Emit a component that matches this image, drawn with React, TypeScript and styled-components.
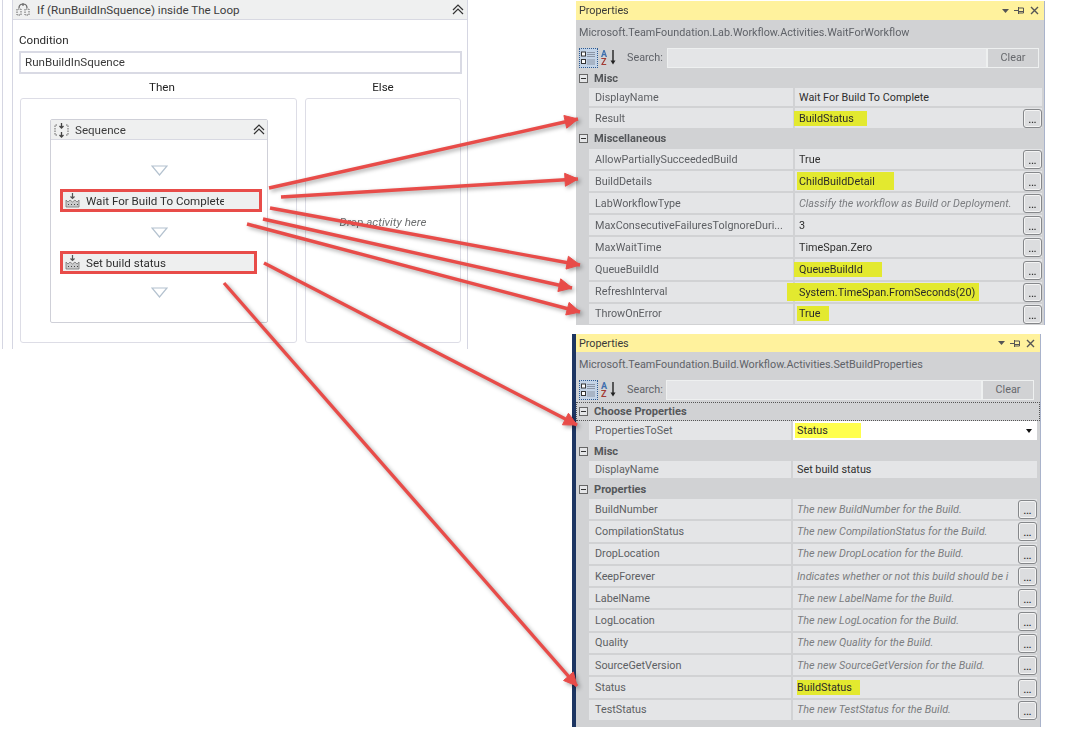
import { createGlobalStyle, styled } from 'styled-components';

const GlobalStyle = createGlobalStyle`
  html, body {
    margin: 0;
    padding: 0;
    background: #ffffff;
  }
  body {
    font-family: Roboto, 'Liberation Sans', sans-serif;
    font-size: 11.6px;
    color: #333;
  }
  * {
    box-sizing: border-box;
  }
`;

const Page = styled.div`
  position: relative;
  width: 1067px;
  height: 733px;
  display: flex;
  align-items: flex-start;
  overflow: hidden;
  filter: blur(0.3px);
`;

/* ---------- workflow designer ---------- */

const Designer = styled.div`
  width: 466px;
  height: 349px;
  margin-left: 2px;
  padding-left: 9px;
  border-left: 1px solid #d5d6e2;
  flex-shrink: 0;
`;
const DesignerFrame = styled.div`
  height: 100%;
  border-left: 1px solid #d5d6e2;
  border-right: 1px solid #d5d6e2;
`;
const ActivityHeader = styled.div`
  height: 20px;
  display: flex;
  align-items: center;
  background: #eff0f0;
  border-bottom: 1px solid #d8d9e2;
  color: #3c3c3c;
`;
const HeaderTitle = styled.span`
  flex: 1;
  margin-left: 6px;
`;
const HeaderCollapse = styled.span`
  display: flex;
  margin-right: 3px;
`;
const DesignerBody = styled.div`
  padding: 12px 5px 0 6px;
`;
const ConditionLabel = styled.div`
  height: 19px;
  line-height: 16px;
  color: #2a2a2a;
`;
const ConditionInput = styled.div`
  width: 443px;
  height: 23px;
  padding-left: 4px;
  line-height: 18px;
  border: 2px solid #d9dae4;
  color: #3a3a3a;
`;
const Branches = styled.div`
  display: grid;
  grid-template-columns: 277px 156px;
  column-gap: 8px;
  margin-left: 1px;
`;
const BranchLabel = styled.div<{ $shift?: number }>`
  height: 24px;
  padding: 5px 0 0 ${(p) => p.$shift ?? 0}px;
  line-height: 17px;
  text-align: center;
  color: #222;
`;
const BranchBox = styled.div`
  height: 245px;
  border: 1px solid #dddde6;
  border-radius: 3px;
`;
const ThenBox = styled(BranchBox)`
  padding: 20px 0 0 29px;
`;
const ElseBox = styled(BranchBox)`
  display: flex;
  align-items: center;
  justify-content: center;
  padding-top: 2px;
  font-style: italic;
  color: #6d6f70;
`;
const SequenceBox = styled.div`
  width: 218px;
  height: 204px;
  border: 1px solid #cfd0d8;
  border-radius: 2px;
`;
const SequenceHeader = styled(ActivityHeader)`
  padding: 0 2px 0 3px;
`;
const SequenceBody = styled.div`
  display: flex;
  flex-direction: column;
  align-items: center;
  padding-top: 25px;
`;
const DropMark = styled.svg`
  width: 17px;
  height: 11px;
  display: block;
`;
const Activity = styled.div<{ $width: number; $after: number }>`
  align-self: flex-start;
  width: ${(p) => p.$width}px;
  height: 23px;
  margin: 13px 0 ${(p) => p.$after}px 9px;
  padding-left: 2px;
  display: flex;
  align-items: center;
  border: 3px solid #e84c49;
  background: #eeefef;
  color: #2f2f2f;
`;
const ActivityName = styled.span`
  width: 138px;
  margin-left: 6px;
  white-space: nowrap;
  overflow: hidden;
`;

const IfIcon = () => (
  <svg width="16" height="16" viewBox="0 0 16 16" fill="none" stroke="#666" style={{ marginLeft: 2 }}>
    <path d="M2 7v6h4V7zM10 7v6h4V7z" strokeDasharray="1.5 1" />
    <path d="M4 6c0-3 2-4 4-4s4 1 4 4M8 1v3" strokeWidth="1.2" />
  </svg>
);
const SequenceIcon = () => (
  <svg width="15" height="16" viewBox="0 0 15 16" fill="none" stroke="#666">
    <path d="M3 3H1v10h2M12 3h2v10h-2" strokeDasharray="1.5 1" />
    <path d="M7.5 1v5M5.5 4l2 2 2-2M7.5 10v5M5.5 13l2 2 2-2" strokeWidth="1.3" stroke="#444" />
  </svg>
);
const ActivityIcon = () => (
  <svg width="15" height="15" viewBox="0 0 15 15" fill="none">
    <path d="M7.5 0v5M5.5 3.5l2 2 2-2" stroke="#555" strokeWidth="1.2" />
    <path d="M1 7l2 2 2-2 2.5 2L10 7l2 2 2-2v7H1z" fill="#c9cacb" stroke="#777" strokeWidth="0.8" />
    <path d="M3 11.5h1M6 11.5h1M9 11.5h1M12 11.5h1" stroke="#444" />
  </svg>
);
const CollapseIcon = () => (
  <svg width="12" height="11" viewBox="0 0 12 11" fill="none" stroke="#333" strokeWidth="1.2">
    <path d="M1 6l5-5 5 5M1 10l5-5 5 5" />
  </svg>
);
const DropTriangle = () => (
  <DropMark viewBox="0 0 17 11" fill="none" stroke="#b4c2cf" strokeWidth="1.2">
    <path d="M1 1h15l-7.5 9z" />
  </DropMark>
);

/* ---------- properties panels ---------- */

const RightColumn = styled.div`
  margin-left: 104px;
  padding-top: 1px;
  display: flex;
  flex-direction: column;
  gap: 9px;
  font-size: 10.8px;
`;
const Panel = styled.div<{ $height: number; $docked?: boolean }>`
  width: 469px;
  height: ${(p) => p.$height}px;
  margin-left: ${(p) => (p.$docked ? 0 : 4)}px;
  background: #d1d2d4;
  border-right: 1px solid #a9b3cb;
  border-left: ${(p) => (p.$docked ? '4px solid #1d3562' : 'none')};
  color: #555;
`;
const TitleBar = styled.div<{ $height: number }>`
  height: ${(p) => p.$height}px;
  display: flex;
  align-items: center;
  justify-content: space-between;
  padding: 0 5px 0 3px;
  background: #fff29d;
  color: #3a3a3a;
`;
const TitleButtons = styled.div`
  display: flex;
  align-items: center;
  gap: 5px;
`;
const TypeName = styled.div`
  height: 24px;
  padding-left: 3px;
  line-height: 25px;
  color: #5f6268;
`;
const Toolbar = styled.div<{ $inputWidth: number; $gap: number }>`
  height: 21px;
  margin-top: 3px;
  padding-left: 3px;
  display: grid;
  grid-template-columns: 19px 19px ${(p) => p.$gap}px ${(p) => p.$inputWidth}px 52px;
  align-items: center;
`;
const CategoryButton = styled.div`
  width: 19px;
  height: 20px;
  display: flex;
  align-items: center;
  justify-content: center;
  background: #c3d3e6;
  border: 1px dotted #2f5a8f;
`;
const SearchLabel = styled.span`
  padding-left: 10px;
  color: #5f6268;
`;
const SearchInput = styled.div`
  height: 20px;
  background: #e4e5e7;
  border: 1px solid #eef0f0;
`;
const ClearButton = styled.div`
  height: 20px;
  line-height: 17px;
  text-align: center;
  border: 1px solid #eef0f0;
  color: #66686c;
`;
const Group = styled.div<{ $top?: number; $height: number; $focused?: boolean }>`
  height: ${(p) => p.$height}px;
  margin-top: ${(p) => p.$top ?? 0}px;
  padding: 0 0 ${(p) => p.$height - 19}px 3px;
  display: flex;
  align-items: center;
  gap: 6px;
  font-size: 11.1px;
  font-weight: 700;
  color: #55575a;
  outline: ${(p) => (p.$focused ? '1px dotted #555' : 'none')};
  outline-offset: -1px;
`;
const MinusBox = styled.span`
  width: 9px;
  height: 9px;
  display: flex;
  align-items: center;
  justify-content: center;
  border: 1px solid #666;
  background: #e4e5e7;
  &::before {
    content: '';
    width: 5px;
    height: 1px;
    background: #333;
  }
`;
const Row = styled.div<{ $height: number; $width: number; $label: number }>`
  width: ${(p) => p.$width}px;
  height: ${(p) => p.$height}px;
  margin-left: 13px;
  padding-bottom: 2px;
  display: grid;
  grid-template-columns: ${(p) => p.$label}px minmax(0, 1fr);
  column-gap: 2px;
`;
const RowLabel = styled.div`
  padding-left: 6px;
  display: flex;
  align-items: center;
  background: #e4e5e7;
  color: #5d5f63;
  white-space: nowrap;
  overflow: hidden;
`;
const RowValue = styled.div<{ $white?: boolean }>`
  position: relative;
  display: flex;
  align-items: center;
  padding-left: 4px;
  background: ${(p) => (p.$white ? '#ffffff' : '#e4e5e7')};
  color: #2e2e2e;
  white-space: nowrap;
`;
const ValueText = styled.span<{ $hint?: boolean }>`
  flex: 1;
  min-width: 0;
  font-style: ${(p) => (p.$hint ? 'italic' : 'normal')};
  color: ${(p) => (p.$hint ? '#7b7d80' : '#2e2e2e')};
`;
const Highlight = styled.span<{ $left: number; $right: number; $tall?: boolean; $bright?: boolean }>`
  display: inline-block;
  margin-left: -${(p) => p.$left}px;
  padding: ${(p) => (p.$tall ? 3 : 1)}px ${(p) => p.$right}px ${(p) => (p.$tall ? 2 : 1)}px ${(p) => p.$left}px;
  background: ${(p) => (p.$bright ? '#ffff4c' : '#e3e92f')};
  color: #2a2a2a;
`;
const EllipsisButton = styled.div`
  width: 19px;
  height: 19px;
  flex-shrink: 0;
  margin-top: 1px;
  display: flex;
  align-items: flex-end;
  justify-content: center;
  padding-bottom: 3px;
  font-size: 9px;
  font-weight: 700;
  line-height: 8px;
  background: #dcdddf;
  border: 1px solid #85878a;
  border-radius: 3px;
  box-shadow: inset 0 0 0 1px #f4f4f4;
`;
const DropCaret = styled.span`
  position: absolute;
  right: 5px;
  top: 8px;
  border-left: 3px solid transparent;
  border-right: 3px solid transparent;
  border-top: 4px solid #111;
`;

const TitleIcons = () => (
  <TitleButtons>
    <svg width="7" height="4" viewBox="0 0 7 4"><path d="M0 0h7L3.5 4z" fill="#555" /></svg>
    <svg width="11" height="9" viewBox="0 0 11 9" fill="none" stroke="#555"><path d="M0 4.5h4M4.5 1v7M4.5 2h5v5h-5M4.5 5.5h5" /></svg>
    <svg width="9" height="9" viewBox="0 0 9 9" fill="none" stroke="#555" strokeWidth="1.4"><path d="M1 1l7 7M8 1L1 8" /></svg>
  </TitleButtons>
);
const CategoryIcon = () => (
  <svg width="15" height="14" viewBox="0 0 15 14" fill="none">
    <rect x="0.5" y="1" width="4" height="4" fill="#fff" stroke="#333" />
    <rect x="0.5" y="8.5" width="4" height="4" fill="#fff" stroke="#333" />
    <path d="M6 1.5h8M6 3.5h8M6 5.5h8M6 9h8M6 11h8M6 13h8" stroke="#8b95a5" />
  </svg>
);
const SortIcon = () => (
  <svg width="17" height="17" viewBox="0 0 17 17" style={{ marginLeft: 3 }}>
    <text x="0" y="8" fontSize="9" fontWeight="700" fill="#3f6fae" fontFamily="Roboto, sans-serif">A</text>
    <text x="0" y="16" fontSize="9" fontWeight="700" fill="#a33b34" fontFamily="Roboto, sans-serif">Z</text>
    <path d="M12 1v12" stroke="#222" strokeWidth="1.4" />
    <path d="M9.5 11.5h5L12 15.5z" fill="#222" />
  </svg>
);

type Mark = { left: number; right: number; tall?: boolean; bright?: boolean };
type PropRow = { name: string; value: string; hint?: boolean; mark?: Mark; button?: boolean; select?: boolean };
type Section = { title: string; rowHeights: number[]; headerHeight?: number; focused?: boolean; top?: number; rows: PropRow[] };

const waitSections: Section[] = [
  {
    title: 'Misc',
    rowHeights: [20, 21],
    top: 1,
    rows: [
      { name: 'DisplayName', value: 'Wait For Build To Complete' },
      { name: 'Result', value: 'BuildStatus', button: true, mark: { left: 5, right: 13 } },
    ],
  },
  {
    title: 'Miscellaneous',
    rowHeights: [22.1],
    headerHeight: 20,
    rows: [
      { name: 'AllowPartiallySucceededBuild', value: 'True', button: true },
      { name: 'BuildDetails', value: 'ChildBuildDetail', button: true, mark: { left: 2, right: 19, tall: true } },
      { name: 'LabWorkflowType', value: 'Classify the workflow as Build or Deployment.', hint: true, button: true },
      { name: 'MaxConsecutiveFailuresToIgnoreDuri...', value: '3', button: true },
      { name: 'MaxWaitTime', value: 'TimeSpan.Zero', button: true },
      { name: 'QueueBuildId', value: 'QueueBuildId', button: true, mark: { left: 5, right: 19 } },
      { name: 'RefreshInterval', value: 'System.TimeSpan.FromSeconds(20)', button: true, mark: { left: 12, right: 4, tall: true } },
      { name: 'ThrowOnError', value: 'True', button: true, mark: { left: 2, right: 9 } },
    ],
  },
];

const buildSections: Section[] = [
  {
    title: 'Choose Properties',
    rowHeights: [21],
    focused: true,
    top: 2,
    rows: [
      { name: 'PropertiesToSet', value: 'Status', select: true, mark: { left: 2, right: 33, bright: true } },
    ],
  },
  {
    title: 'Misc',
    rowHeights: [19],
    rows: [{ name: 'DisplayName', value: 'Set build status' }],
  },
  {
    title: 'Properties',
    rowHeights: [22.3],
    rows: [
      { name: 'BuildNumber', value: 'The new BuildNumber for the Build.', hint: true, button: true },
      { name: 'CompilationStatus', value: 'The new CompilationStatus for the Build.', hint: true, button: true },
      { name: 'DropLocation', value: 'The new DropLocation for the Build.', hint: true, button: true },
      { name: 'KeepForever', value: 'Indicates whether or not this build should be i', hint: true, button: true },
      { name: 'LabelName', value: 'The new LabelName for the Build.', hint: true, button: true },
      { name: 'LogLocation', value: 'The new LogLocation for the Build.', hint: true, button: true },
      { name: 'Quality', value: 'The new Quality for the Build.', hint: true, button: true },
      { name: 'SourceGetVersion', value: 'The new SourceGetVersion for the Build.', hint: true, button: true },
      { name: 'Status', value: 'BuildStatus', button: true, mark: { left: 0, right: 8 } },
      { name: 'TestStatus', value: 'The new TestStatus for the Build.', hint: true, button: true },
    ],
  },
];

interface PropertiesPanelProps {
  typeName: string;
  sections: Section[];
  height: number;
  docked?: boolean;
  titleHeight: number;
  inputWidth: number;
  rowWidth: number;
  labelWidth: number;
}

const PropertiesPanel = ({
  typeName,
  sections,
  height,
  docked,
  titleHeight,
  inputWidth,
  rowWidth,
  labelWidth,
}: PropertiesPanelProps) => (
  <Panel $height={height} $docked={docked}>
    <TitleBar $height={titleHeight}>
      <span>Properties</span>
      <TitleIcons />
    </TitleBar>
    <TypeName>{typeName}</TypeName>
    <Toolbar $inputWidth={inputWidth} $gap={docked ? 49 : 50}>
      <CategoryButton>
        <CategoryIcon />
      </CategoryButton>
      <SortIcon />
      <SearchLabel>Search:</SearchLabel>
      <SearchInput />
      <ClearButton>Clear</ClearButton>
    </Toolbar>
    {sections.map((section) => (
      <div key={section.title}>
        <Group $top={section.top} $height={section.headerHeight ?? 19} $focused={section.focused}>
          <MinusBox />
          {section.title}
        </Group>
        {section.rows.map((row, i) => (
          <Row
            key={row.name}
            $height={section.rowHeights[i] ?? section.rowHeights[0]}
            $width={rowWidth}
            $label={labelWidth}
          >
            <RowLabel>{row.name}</RowLabel>
            <RowValue $white={row.select}>
              <ValueText $hint={row.hint}>
                {row.mark ? (
                  <Highlight
                    $left={row.mark.left}
                    $right={row.mark.right}
                    $tall={row.mark.tall}
                    $bright={row.mark.bright}
                  >
                    {row.value}
                  </Highlight>
                ) : (
                  row.value
                )}
              </ValueText>
              {row.button && <EllipsisButton>...</EllipsisButton>}
              {row.select && <DropCaret />}
            </RowValue>
          </Row>
        ))}
      </div>
    ))}
  </Panel>
);

/* ---------- callout arrows drawn over the composite ---------- */

const ArrowLayer = styled.svg`
  position: absolute;
  left: 0;
  top: 0;
  width: 1067px;
  height: 733px;
  pointer-events: none;
  filter: drop-shadow(2px 2px 2px rgba(0, 0, 0, 0.35));
`;

const arrows = [
  [269, 188, 578, 119],
  [281, 197, 578, 179],
  [270, 208, 580, 265],
  [263, 219, 572, 288],
  [247, 224, 580, 312],
  [264, 263, 577, 425],
  [224, 283, 577, 686],
];

const arrowHead = (x1: number, y1: number, x2: number, y2: number) => {
  const len = Math.hypot(x2 - x1, y2 - y1);
  const ux = (x2 - x1) / len;
  const uy = (y2 - y1) / len;
  const bx = x2 - ux * 13;
  const by = y2 - uy * 13;
  return `${x2},${y2} ${bx - uy * 6.5},${by + ux * 6.5} ${bx + uy * 6.5},${by - ux * 6.5}`;
};

const App = () => {
  return (
    <Page>
      <GlobalStyle />
      <Designer>
        <DesignerFrame>
          <ActivityHeader>
            <IfIcon />
            <HeaderTitle>If (RunBuildInSquence) inside The Loop</HeaderTitle>
            <HeaderCollapse>
              <CollapseIcon />
            </HeaderCollapse>
          </ActivityHeader>
          <DesignerBody>
            <ConditionLabel>Condition</ConditionLabel>
            <ConditionInput>RunBuildInSquence</ConditionInput>
            <Branches>
              <BranchLabel $shift={7}>Then</BranchLabel>
              <BranchLabel>Else</BranchLabel>
              <ThenBox>
                <SequenceBox>
                  <SequenceHeader>
                    <SequenceIcon />
                    <HeaderTitle>Sequence</HeaderTitle>
                    <CollapseIcon />
                  </SequenceHeader>
                  <SequenceBody>
                    <DropTriangle />
                    <Activity $width={202} $after={15}>
                      <ActivityIcon />
                      <ActivityName>Wait For Build To Complete</ActivityName>
                    </Activity>
                    <DropTriangle />
                    <Activity $width={197} $after={13}>
                      <ActivityIcon />
                      <ActivityName>Set build status</ActivityName>
                    </Activity>
                    <DropTriangle />
                  </SequenceBody>
                </SequenceBox>
              </ThenBox>
              <ElseBox>Drop activity here</ElseBox>
            </Branches>
          </DesignerBody>
        </DesignerFrame>
      </Designer>
      <RightColumn>
        <PropertiesPanel
          typeName="Microsoft.TeamFoundation.Lab.Workflow.Activities.WaitForWorkflow"
          sections={waitSections}
          height={324}
          titleHeight={19}
          inputWidth={320}
          rowWidth={453}
          labelWidth={204}
        />
        <PropertiesPanel
          docked
          typeName="Microsoft.TeamFoundation.Build.Workflow.Activities.SetBuildProperties"
          sections={buildSections}
          height={393}
          titleHeight={18}
          inputWidth={316}
          rowWidth={448}
          labelWidth={202}
        />
      </RightColumn>
      <ArrowLayer viewBox="0 0 1067 733">
        {arrows.map(([x1, y1, x2, y2]) => (
          <g key={`${x1}-${y1}`} fill="#e84c49" stroke="#e84c49">
            <line x1={x1} y1={y1} x2={x2} y2={y2} strokeWidth="3.4" />
            <polygon points={arrowHead(x1, y1, x2, y2)} strokeWidth="1" />
          </g>
        ))}
      </ArrowLayer>
    </Page>
  );
};

export default App;
